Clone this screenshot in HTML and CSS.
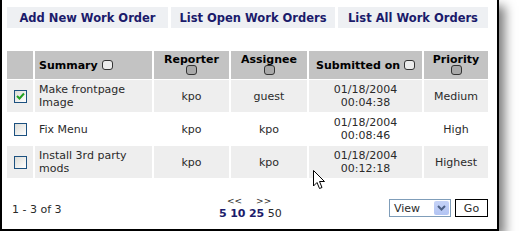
FILE: index.html
```html
<!DOCTYPE html>
<html lang="en">
<head>
    <meta charset="UTF-8">
    <title>Work Orders</title>
    <link rel="stylesheet" href="styles.css">
</head>
<body>

<div class="frame">
    <div class="nav">
        <a class="nav-item nav-first" href="#">Add New Work Order</a>
        <a class="nav-item nav-second" href="#">List Open Work Orders</a>
        <a class="nav-item nav-third" href="#">List All Work Orders</a>
    </div>

    <table class="orders">
        <colgroup>
            <col class="c-check">
            <col class="c-summary">
            <col class="c-reporter">
            <col class="c-assignee">
            <col class="c-date">
            <col class="c-priority">
        </colgroup>
        <thead>
            <tr>
                <th></th>
                <th class="left">Summary <span class="sort light"></span></th>
                <th>Reporter<br><span class="sort"></span></th>
                <th>Assignee<br><span class="sort"></span></th>
                <th>Submitted on <span class="sort light"></span></th>
                <th>Priority<br><span class="sort"></span></th>
            </tr>
        </thead>
        <tbody>
            <tr class="odd">
                <td><span class="box checked">
                    <svg width="9" height="9" viewBox="0 0 9 9"><path d="M1 4 L3.5 6.5 L8 1.5" fill="none" stroke="#21a121" stroke-width="2"/></svg>
                </span></td>
                <td class="left">Make frontpage<br>Image</td>
                <td>kpo</td>
                <td>guest</td>
                <td>01/18/2004<br>00:04:38</td>
                <td>Medium</td>
            </tr>
            <tr>
                <td><span class="box"></span></td>
                <td class="left">Fix Menu</td>
                <td>kpo</td>
                <td>kpo</td>
                <td>01/18/2004<br>00:08:46</td>
                <td>High</td>
            </tr>
            <tr class="odd">
                <td><span class="box"></span></td>
                <td class="left">Install 3rd party<br>mods</td>
                <td>kpo</td>
                <td>kpo</td>
                <td>01/18/2004<br>00:12:18</td>
                <td>Highest</td>
            </tr>
        </tbody>
    </table>

    <div class="footer">
        <div class="count">1 - 3 of 3</div>
        <div class="pager">
            <div class="arrows"><span>&lt;&lt;</span><span>&gt;&gt;</span></div>
            <div class="sizes"><b>5</b> <b>10</b> <b>25</b> 50</div>
        </div>
        <div class="actions">
            <div class="select">
                <span class="select-text">View</span>
                <span class="select-btn">
                    <svg width="9" height="6" viewBox="0 0 9 6"><path d="M1 1 L4.5 4.5 L8 1" fill="none" stroke="#4d6185" stroke-width="2"/></svg>
                </span>
            </div>
            <div class="go">Go</div>
        </div>
    </div>

    <svg class="cursor" width="13" height="21" viewBox="0 0 13 21">
        <path d="M0.5 0.5 L0.5 16 L4 12.5 L6.5 18.5 L9 17.5 L6.5 11.5 L11.5 11.5 Z" fill="#fff" stroke="#000" stroke-width="1"/>
    </svg>
</div>

</body>
</html>
```

FILE: styles.css
```css
body {
    margin: 0;
    background: #fff;
    font-family: "DejaVu Sans", Verdana, sans-serif;
    font-size: 11px;
    color: #2a2a2a;
}

.frame {
    position: relative;
    box-sizing: border-box;
    width: 499px;
    height: 231px;
    border: 2px solid #000;
    border-top: none;
    background: #fff;
    box-shadow: 6px 6px 10px rgba(0, 0, 0, 0.5);
    padding: 7px 9px 0 5px;
}

.nav {
    display: flex;
    gap: 3px;
    height: 21px;
}

.nav-item {
    display: flex;
    align-items: center;
    justify-content: center;
    background: #eef0f3;
    color: #1b1b6b;
    font-weight: bold;
    font-size: 11.5px;
    text-decoration: none;
}

.nav-first { width: 161px; }
.nav-second { width: 164px; }
.nav-third { flex: 1; }

.orders {
    margin-top: 22px;
    width: 481px;
    border-collapse: separate;
    border-spacing: 2px 1px;
    margin-left: -2px;
    table-layout: fixed;
}

.c-check { width: 26px; }
.c-summary { width: 117px; }
.c-reporter { width: 75px; }
.c-assignee { width: 76px; }
.c-date { width: 113px; }
.c-priority { width: 64px; }

.orders th {
    background: #c3c3c3;
    color: #000;
    font-weight: bold;
    height: 28px;
    padding: 0;
    text-align: center;
    vertical-align: middle;
    line-height: 11px;
}

.orders td {
    height: 32px;
    padding: 0;
    text-align: center;
    vertical-align: middle;
    line-height: 13px;
}

.orders .left {
    text-align: left;
    padding-left: 4px;
}

.orders tr.odd td {
    background: #eeeeee;
}

.sort {
    display: inline-block;
    box-sizing: border-box;
    width: 11px;
    height: 10px;
    border: 1px solid #333;
    border-radius: 3px;
    background: #a9a9a9;
    vertical-align: -1px;
}

.sort.light {
    background: #ececec;
}

.box {
    display: inline-flex;
    align-items: center;
    justify-content: center;
    box-sizing: border-box;
    width: 13px;
    height: 13px;
    border: 1px solid #1c5180;
    background: linear-gradient(135deg, #dcdcd7, #fff);
    vertical-align: middle;
}

.footer {
    display: flex;
    align-items: center;
    margin-top: 17px;
}

.count {
    width: 207px;
    padding-left: 5px;
    padding-top: 2px;
    font-size: 11px;
}

.pager {
    width: 170px;
}

.arrows {
    display: flex;
    gap: 14px;
    padding-left: 8px;
    font-size: 9px;
    line-height: 11px;
}

.sizes {
    font-size: 11px;
    line-height: 13px;
}

.sizes b {
    color: #1b1b6b;
}

.actions {
    display: flex;
    align-items: center;
    gap: 4px;
    margin-left: auto;
}

.select {
    box-sizing: border-box;
    display: flex;
    align-items: center;
    width: 62px;
    height: 18px;
    border: 1px solid #7f9db9;
    background: #fff;
    padding: 1px;
}

.select-text {
    flex: 1;
    padding-left: 3px;
    font-size: 11px;
}

.select-btn {
    display: flex;
    align-items: center;
    justify-content: center;
    width: 15px;
    height: 14px;
    background: linear-gradient(#c6d3f7, #b2c4f3);
    border-radius: 2px;
}

.go {
    box-sizing: border-box;
    width: 33px;
    height: 18px;
    border: 1px solid #000;
    display: flex;
    align-items: center;
    justify-content: center;
    font-size: 11px;
}

.cursor {
    position: absolute;
    left: 311px;
    top: 170px;
}
```
